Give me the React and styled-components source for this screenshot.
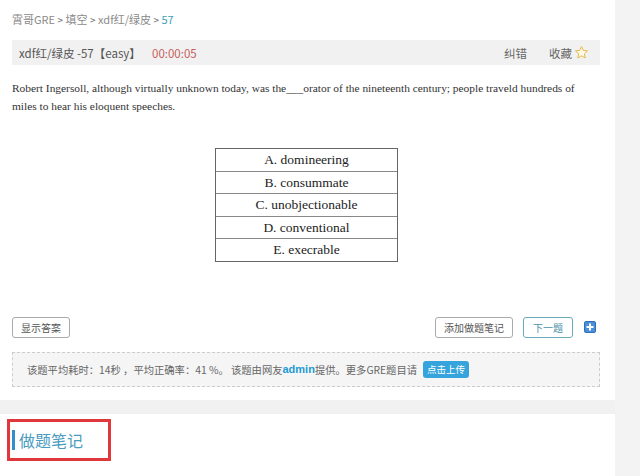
import React from 'react';
import styled, { createGlobalStyle } from 'styled-components';

const GlobalStyle = createGlobalStyle`
  html, body { margin: 0; padding: 0; background: #f3f3f3; }
  body { font-family: "Liberation Sans", "Noto Sans CJK SC", sans-serif; }
`;

const serif = `"Liberation Serif", "Times New Roman", serif`;

const options = ['A. domineering', 'B. consummate', 'C. unobjectionable', 'D. conventional', 'E. execrable'];

const Star = () => (
  <svg width="15" height="15" viewBox="0 0 24 24">
    <path
      d="M12 2.5l2.9 6.2 6.7.7-5 4.6 1.4 6.7L12 17.3l-6 3.4 1.4-6.7-5-4.6 6.7-.7z"
      fill="#fffbe8"
      stroke="#e8b84a"
      strokeWidth="1.6"
      strokeLinejoin="round"
    />
  </svg>
);

const PlusIcon = () => (
  <svg width="12" height="12" viewBox="0 0 12 12">
    <rect x="0.5" y="0.5" width="11" height="11" rx="1.5" fill="#4a90d9" stroke="#2f6fb5" />
    <path d="M6 2.5v7M2.5 6h7" stroke="#fff" strokeWidth="2" />
  </svg>
);

export default function App() {
  return (
    <Page>
      <GlobalStyle />
      <Main>
        <Panel>
          <Crumbs>
            霄哥GRE <Sep>&gt;</Sep> 填空 <Sep>&gt;</Sep> xdf红/绿皮 <Sep>&gt;</Sep> <Current>57</Current>
          </Crumbs>
          <HeadBar>
            <Title>xdf红/绿皮 -57【easy】</Title>
            <Timer>00:00:05</Timer>
            <Spacer />
            <HeadLink>纠错</HeadLink>
            <HeadLink>收藏<Star /></HeadLink>
          </HeadBar>
          <Question>
            Robert Ingersoll, although virtually unknown today, was the___orator of the nineteenth century; people traveld hundreds of miles to hear his eloquent speeches.
          </Question>
          <Options>
            {options.map(o => (
              <Option key={o}>{o}</Option>
            ))}
          </Options>
          <Actions>
            <Button>显示答案</Button>
            <Spacer />
            <Button>添加做题笔记</Button>
            <Button $primary>下一题</Button>
            <PlusWrap><PlusIcon /></PlusWrap>
          </Actions>
          <InfoBox>
            该题平均耗时：14秒 ，平均正确率：41 %。 该题由网友<Admin>admin</Admin>提供。更多GRE题目请
            <Upload>点击上传</Upload>
          </InfoBox>
        </Panel>
        <Divider />
        <Notes>
          <NotesFrame>
            <NotesTitle>做题笔记</NotesTitle>
          </NotesFrame>
        </Notes>
      </Main>
    </Page>
  );
}

const Page = styled.div`
  display: flex;
  width: 640px;
  height: 476px;
  overflow: hidden;
  background: #f3f3f3;
`;

const Main = styled.div`
  width: 615px;
  display: flex;
  flex-direction: column;
`;

const Panel = styled.div`
  background: #fff;
  height: 400px;
  padding: 0 15px 0 12px;
  box-sizing: border-box;
  display: flex;
  flex-direction: column;
`;

const Crumbs = styled.div`
  padding-top: 11px;
  height: 18px;
  font-size: 11px;
  color: #8a8a8a;
  font-family: "Noto Sans CJK SC", sans-serif;
`;

const Sep = styled.span`
  color: #666;
  font-size: 10px;
`;

const Current = styled.span`
  color: #3c9fb6;
`;

const HeadBar = styled.div`
  margin-top: 11px;
  height: 25px;
  background: #f1f1f1;
  display: flex;
  align-items: center;
  padding: 0 0 0 7px;
  font-size: 11.5px;
  font-family: "Noto Sans CJK SC", sans-serif;
  color: #555;
`;

const Title = styled.span`
  width: 133px;
`;

const Timer = styled.span`
  color: #c75c5c;
`;

const Spacer = styled.div`
  flex: 1;
`;

const HeadLink = styled.span`
  display: flex;
  align-items: center;
  gap: 2px;
  color: #666;
  &:last-child { margin-right: 11px; margin-left: 22px; }
`;

const Question = styled.p`
  margin: 14px 0 0;
  font-family: ${serif};
  font-size: 11.4px;
  line-height: 18px;
  color: #333;
`;

const Options = styled.div`
  align-self: flex-start;
  margin: 33px 0 0 203px;
  width: 181px;
  border: 1px solid #666;
`;

const Option = styled.div`
  height: 21.5px;
  line-height: 21.5px;
  text-align: center;
  font-family: ${serif};
  font-size: 13.5px;
  color: #222;
  border-top: 1px solid #888;
  &:first-child { border-top: none; }
`;

const Actions = styled.div`
  margin-top: 55px;
  display: flex;
  align-items: center;
  gap: 10px;
`;

const Button = styled.button`
  height: 21px;
  padding: 0 ${p => (p.$primary ? '9px' : '8px')};
  border: 1px solid ${p => (p.$primary ? '#6aaab8' : '#aaa')};
  border-radius: 3px;
  background: #fff;
  font-family: "Noto Sans CJK SC", sans-serif;
  font-size: 10px;
  color: ${p => (p.$primary ? '#4a90a8' : '#555')};
`;

const PlusWrap = styled.span`
  display: flex;
  margin-left: 1px;
  margin-right: 4px;
`;

const InfoBox = styled.div`
  margin-top: 14px;
  height: 35px;
  box-sizing: border-box;
  border: 1px dashed #ccc;
  background: #f5f5f5;
  display: flex;
  align-items: center;
  padding-left: 14px;
  font-family: "Noto Sans CJK SC", sans-serif;
  font-size: 10.3px;
  color: #666;
`;

const Admin = styled.b`
  color: #1e9ad3;
  font-family: "Liberation Sans", sans-serif;
  font-size: 11px;
`;

const Upload = styled.span`
  margin-left: 6px;
  height: 17px;
  line-height: 17px;
  padding: 0 4px;
  background: #35a4dc;
  color: #fff;
  border-radius: 3px;
  font-size: 9.5px;
`;

const Divider = styled.div`
  height: 14px;
  background: #f1f1f1;
`;

const Notes = styled.div`
  flex: 1;
  background: #fff;
  padding: 5px 0 0 7px;
`;

const NotesFrame = styled.div`
  width: 104px;
  height: 42px;
  box-sizing: border-box;
  border: 3px solid #e0383a;
  display: flex;
  align-items: center;
  padding-left: 2px;
`;

const NotesTitle = styled.div`
  border-left: 3px solid #2f8fc8;
  padding-left: 4px;
  height: 20px;
  line-height: 20px;
  font-family: "Noto Sans CJK SC", sans-serif;
  font-size: 16px;
  color: #4a9cc0;
`;
